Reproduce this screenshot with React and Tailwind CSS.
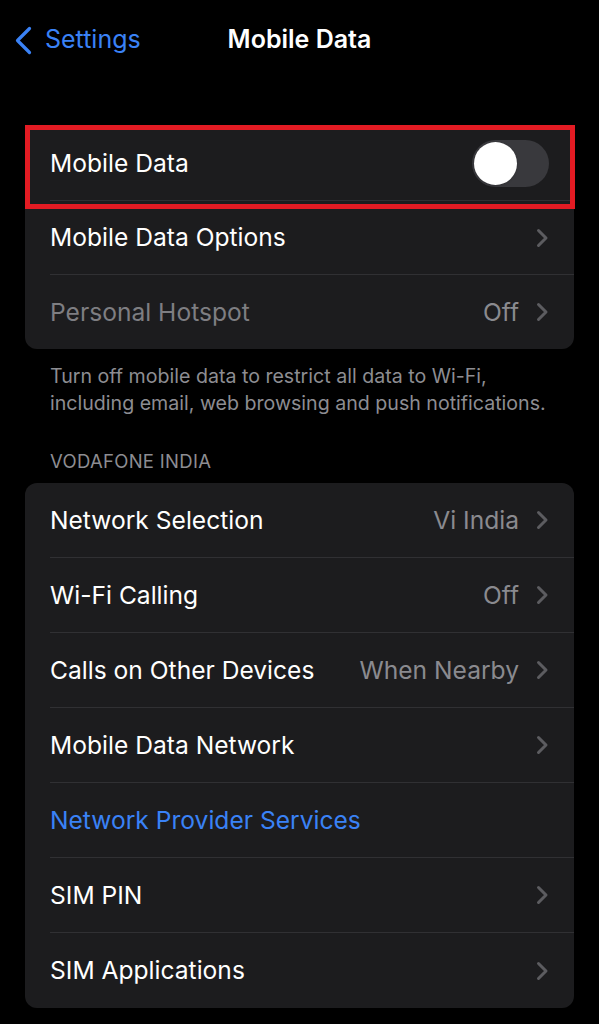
import React from "react";

const Chevron = () => (
  <svg width="13" height="20" viewBox="0 0 13 20" className="shrink-0">
    <polyline
      points="2.5,2.5 10,10 2.5,17.5"
      fill="none"
      stroke="#5c5c60"
      strokeWidth="3"
      strokeLinecap="round"
      strokeLinejoin="round"
    />
  </svg>
);

const Row = ({ label, value, chevron = true, labelClass = "text-white", last, h = "h-[74px]" }) => (
  <div className={`pl-[25px] ${h}`}>
    <div
      className={`flex h-full items-center pr-[25px] ${
        last ? "" : "border-b border-[#303033]"
      }`}
    >
      <span className={`flex-1 text-[24.6px] ${labelClass}`}>{label}</span>
      {value && <span className="mr-[17px] text-[24.6px] text-[#8a8a8f]">{value}</span>}
      {chevron && <Chevron />}
    </div>
  </div>
);

export default function App() {
  return (
    <div
      className="min-h-[1024px] w-full bg-black"
      style={{ fontFamily: "Inter, 'Noto Sans', sans-serif" }}
    >
      {/* nav */}
      <div className="grid h-[80px] grid-cols-[1fr_auto_1fr] items-center">
        <div className="flex items-center pl-[14px]">
          <svg width="19" height="29" viewBox="0 0 19 29">
            <polyline
              points="15.5,2.5 3.5,14.5 15.5,26.5"
              fill="none"
              stroke="#3a82f6"
              strokeWidth="3.2"
              strokeLinecap="round"
              strokeLinejoin="round"
            />
          </svg>
          <span className="ml-[12px] text-[25px] text-[#3a82f6]">Settings</span>
        </div>
        <span className="text-[25px] font-semibold text-white">Mobile Data</span>
        <div />
      </div>

      <div className="px-[25px] pt-[47px]">
        {/* first group */}
        <div className="relative rounded-[12px] bg-[#1c1c1e]">
          <div className="relative pl-[25px] h-[74px]">
            <div className="flex h-full items-center border-b border-[#303033] pr-[25px]">
              <span className="flex-1 text-[24.6px] text-white">Mobile Data</span>
              <div className="flex h-[47px] w-[77px] items-center rounded-full bg-[#39393d] pl-[2px]">
                <div className="h-[43px] w-[43px] rounded-full bg-white shadow" />
              </div>
            </div>
            <div className="pointer-events-none absolute left-0 -right-[1px] -top-[2px] h-[84px] border-[5px] border-[#e31b23]" />
          </div>
          <Row label="Mobile Data Options" />
          <Row label="Personal Hotspot" value="Off" labelClass="text-[#7e7e82]" last />
        </div>

        <p className="mt-[14px] px-[25px] text-[19.6px] leading-[27px] text-[#8d8d92]">
          Turn off mobile data to restrict all data to Wi-Fi, including email, web browsing and push notifications.
        </p>

        <p className="mt-[34px] px-[25px] text-[18.5px] leading-[20px] tracking-[0.3px] text-[#8d8d92]">
          VODAFONE INDIA
        </p>

        {/* second group */}
        <div className="mt-[12px] overflow-hidden rounded-[12px] bg-[#1c1c1e]">
          <Row h="h-[75px]" label="Network Selection" value="Vi India" />
          <Row h="h-[75px]" label="Wi-Fi Calling" value="Off" />
          <Row h="h-[75px]" label="Calls on Other Devices" value="When Nearby" />
          <Row h="h-[75px]" label="Mobile Data Network" />
          <Row h="h-[75px]" label="Network Provider Services" chevron={false} labelClass="text-[#3a82f6]" />
          <Row h="h-[75px]" label="SIM PIN" />
          <Row h="h-[75px]" label="SIM Applications" last />
        </div>
      </div>
    </div>
  );
}
